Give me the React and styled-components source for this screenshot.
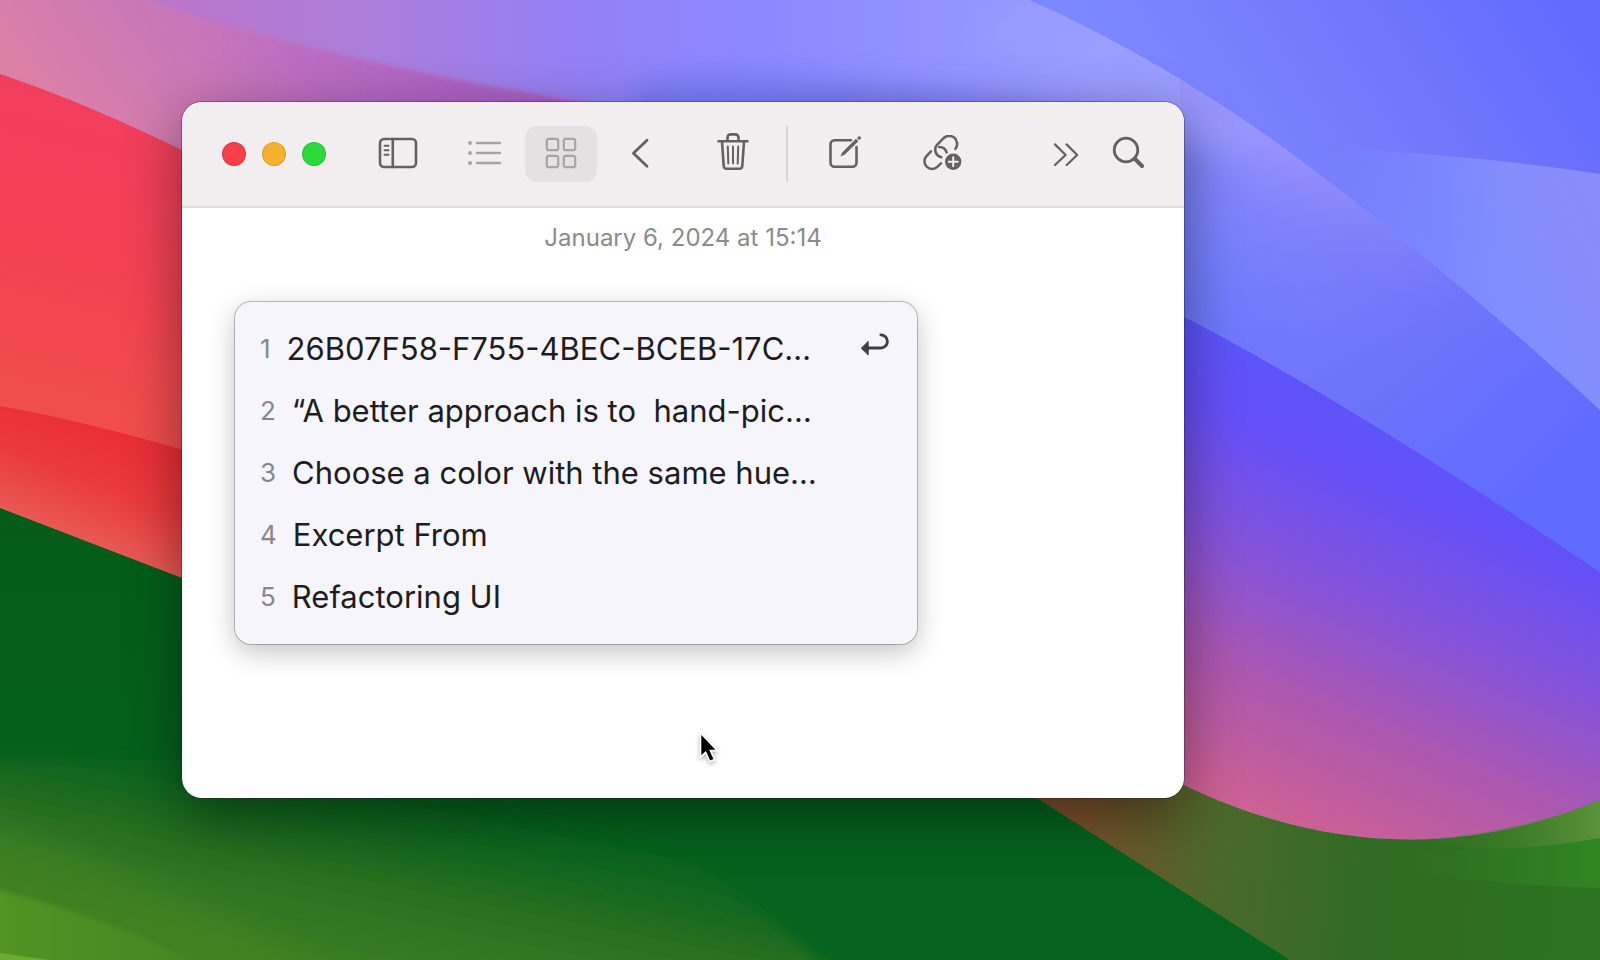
import React from "react";
import styled, { createGlobalStyle } from "styled-components";

const GlobalStyle = createGlobalStyle`
  * { box-sizing: border-box; }
  body {
    margin: 0;
    font-family: Inter, "Liberation Sans", sans-serif;
    -webkit-font-smoothing: antialiased;
  }
  button { font: inherit; color: inherit; }
`;

const Desktop = styled.div`
  position: relative;
  display: flex;
  min-height: 100vh;
  padding: 102px 26% 162px 182px;
  overflow: hidden;
`;

const WallpaperSvg = styled.svg`
  position: absolute;
  inset: 0;
  width: 100%;
  height: 100%;
`;

const Window = styled.main`
  position: relative;
  flex: 1;
  display: flex;
  flex-direction: column;
  min-width: 0;
  border-radius: 20px;
  background: #ffffff;
  box-shadow: 0 0 0 1px rgba(30, 10, 50, 0.3), 0 16px 56px rgba(0, 0, 0, 0.42);
`;

const Toolbar = styled.header`
  display: flex;
  align-items: center;
  height: 106px;
  padding: 0 32px 0 40px;
  border-bottom: 2px solid #dfdbdd;
  border-radius: 20px 20px 0 0;
  background: #f2eeef;
  color: #656162;
`;

const Group = styled.div`
  display: flex;
  align-items: center;
  gap: ${(p) => p.$gap || 0}px;
  margin-left: ${(p) => (p.$end ? "auto" : `${p.$before || 0}px`)};
`;

const Light = styled.button`
  width: 24px;
  height: 24px;
  padding: 0;
  border: 1px solid rgba(0, 0, 0, 0.1);
  border-radius: 50%;
  background: ${(p) => p.$color};
`;

const ToolButton = styled.button`
  display: flex;
  align-items: center;
  justify-content: center;
  flex: none;
  width: ${(p) => (p.$narrow ? 48 : 72)}px;
  height: 56px;
  padding: 0;
  border: 0;
  border-radius: 12px;
  background: ${(p) => (p.$active ? "#e4e1e2" : "transparent")};
  color: ${(p) => (p.$muted ? "#a8a4a5" : "inherit")};
`;

const Separator = styled.span`
  flex: none;
  width: 2px;
  height: 56px;
  background: #d8d4d5;
`;

const Icon = styled.svg`
  display: block;
  flex: none;
  fill: none;
  stroke: currentColor;
  stroke-width: 2.6;
  stroke-linecap: round;
  stroke-linejoin: round;
`;

const Note = styled.section`
  flex: 1;
  padding: 16px 53px 0;
`;

const NoteDate = styled.time`
  display: block;
  font-size: 24px;
  line-height: 28px;
  text-align: center;
  color: #8c8b8c;
`;

const ClipList = styled.ol`
  width: 77%;
  max-width: 682px;
  margin: 50px 0 0;
  padding: 16px 0;
  list-style: none;
  border-radius: 16px;
  background: #f6f5fb;
  box-shadow: 0 0 0 1px rgba(0, 0, 0, 0.24), 0 8px 28px rgba(0, 0, 0, 0.24);
`;

const ClipRow = styled.button`
  display: flex;
  align-items: center;
  width: 100%;
  height: 62px;
  padding: 0 28px 0 25px;
  border: 0;
  background: none;
  text-align: left;
`;

const ClipNumber = styled.span`
  margin-right: 16px;
  font-size: 26px;
  line-height: 36px;
  color: #88878d;
`;

const ClipText = styled.span`
  flex: 1;
  font-size: 31px;
  line-height: 36px;
  white-space: pre;
  color: #1d1c21;
`;

const Cursor = styled.svg`
  position: absolute;
  left: 516px;
  top: 628px;
  filter: drop-shadow(0 2px 2px rgba(0, 0, 0, 0.3));
`;

const clips = [
  "26B07F58-F755-4BEC-BCEB-17C…",
  "“A better approach is to  hand-pic…",
  "Choose a color with the same hue…",
  "Excerpt From",
  "Refactoring UI",
];

function Wallpaper() {
  return (
    <WallpaperSvg viewBox="0 0 1600 960" preserveAspectRatio="none" aria-hidden="true">
      <defs>
        <linearGradient id="sky" gradientUnits="userSpaceOnUse" x1="100" y1="0" x2="1100" y2="0">
          <stop offset="0" stopColor="#c074c4" />
          <stop offset="0.25" stopColor="#ad7dd8" />
          <stop offset="0.48" stopColor="#9481f6" />
          <stop offset="0.65" stopColor="#8b88ff" />
          <stop offset="1" stopColor="#9a9cff" />
        </linearGradient>
        <linearGradient id="pink" gradientUnits="userSpaceOnUse" x1="60" y1="130" x2="260" y2="-20">
          <stop offset="0" stopColor="#dc80a6" />
          <stop offset="0.5" stopColor="#cb79b4" />
          <stop offset="1" stopColor="#bf72c2" />
        </linearGradient>
        <linearGradient id="pinkEnd" gradientUnits="userSpaceOnUse" x1="200" y1="0" x2="590" y2="0">
          <stop offset="0" stopColor="#b868be" stopOpacity="0" />
          <stop offset="0.6" stopColor="#ae65c4" />
          <stop offset="1" stopColor="#a45fc8" />
        </linearGradient>
        <linearGradient id="topRight" gradientUnits="userSpaceOnUse" x1="1220" y1="220" x2="1560" y2="0">
          <stop offset="0" stopColor="#7c88ff" />
          <stop offset="0.5" stopColor="#7478fb" />
          <stop offset="1" stopColor="#626bfd" />
        </linearGradient>
        <linearGradient id="glow" gradientUnits="userSpaceOnUse" x1="1380" y1="300" x2="1600" y2="200">
          <stop offset="0" stopColor="#7a8eff" />
          <stop offset="0.5" stopColor="#808efd" />
          <stop offset="1" stopColor="#8c8bfa" />
        </linearGradient>
        <linearGradient id="glowFade" gradientUnits="userSpaceOnUse" x1="1320" y1="0" x2="1500" y2="0">
          <stop offset="0" stopColor="#fff" stopOpacity="0" />
          <stop offset="1" stopColor="#fff" />
        </linearGradient>
        <mask id="glowMask">
          <rect width="1600" height="960" fill="url(#glowFade)" />
        </mask>
        <linearGradient id="band" gradientUnits="userSpaceOnUse" x1="1320" y1="170" x2="1220" y2="330">
          <stop offset="0" stopColor="#9690fb" />
          <stop offset="0.35" stopColor="#7f84fb" />
          <stop offset="1" stopColor="#6c7afc" />
        </linearGradient>
        <linearGradient id="bandEnd" gradientUnits="userSpaceOnUse" x1="1270" y1="180" x2="1570" y2="450">
          <stop offset="0" stopColor="#7878fa" stopOpacity="0" />
          <stop offset="0.55" stopColor="#6c72fa" stopOpacity="0.9" />
          <stop offset="1" stopColor="#606cff" />
        </linearGradient>
        <linearGradient id="deep" gradientUnits="userSpaceOnUse" x1="1470" y1="420" x2="1290" y2="840">
          <stop offset="0" stopColor="#5a56fb" />
          <stop offset="0.2" stopColor="#6450f8" />
          <stop offset="0.45" stopColor="#8453da" />
          <stop offset="0.72" stopColor="#ae58ae" />
          <stop offset="1" stopColor="#d06290" />
        </linearGradient>
        <linearGradient id="olive" gradientUnits="userSpaceOnUse" x1="1070" y1="850" x2="1600" y2="900">
          <stop offset="0" stopColor="#7c502c" />
          <stop offset="0.12" stopColor="#665a2a" />
          <stop offset="0.28" stopColor="#4a692a" />
          <stop offset="0.55" stopColor="#326b24" />
          <stop offset="1" stopColor="#2b731e" />
        </linearGradient>
        <linearGradient id="leaf" gradientUnits="userSpaceOnUse" x1="1420" y1="0" x2="1600" y2="0">
          <stop offset="0" stopColor="#3c7a28" stopOpacity="0" />
          <stop offset="1" stopColor="#5c923a" />
        </linearGradient>
        <linearGradient id="leafLow" gradientUnits="userSpaceOnUse" x1="1400" y1="0" x2="1600" y2="0">
          <stop offset="0" stopColor="#2c7a20" stopOpacity="0" />
          <stop offset="1" stopColor="#308622" />
        </linearGradient>
        <linearGradient id="red" gradientUnits="userSpaceOnUse" x1="120" y1="100" x2="40" y2="430">
          <stop offset="0" stopColor="#f13e5e" />
          <stop offset="0.5" stopColor="#f24252" />
          <stop offset="1" stopColor="#f0504a" />
        </linearGradient>
        <linearGradient id="redLow" gradientUnits="userSpaceOnUse" x1="110" y1="420" x2="60" y2="550">
          <stop offset="0" stopColor="#ea2c38" />
          <stop offset="0.45" stopColor="#ea3a3c" />
          <stop offset="1" stopColor="#e8625a" />
        </linearGradient>
        <linearGradient id="green" gradientUnits="userSpaceOnUse" x1="0" y1="500" x2="0" y2="960">
          <stop offset="0" stopColor="#045c18" />
          <stop offset="1" stopColor="#066420" />
        </linearGradient>
        <linearGradient id="lime" gradientUnits="userSpaceOnUse" x1="260" y1="760" x2="220" y2="960">
          <stop offset="0" stopColor="#1a6a20" stopOpacity="0" />
          <stop offset="0.5" stopColor="#2a7020" />
          <stop offset="1" stopColor="#3e8020" />
        </linearGradient>
        <linearGradient id="grass" gradientUnits="userSpaceOnUse" x1="0" y1="0" x2="200" y2="0">
          <stop offset="0" stopColor="#529422" />
          <stop offset="1" stopColor="#448624" />
        </linearGradient>
        <filter id="soft" x="-20%" y="-20%" width="140%" height="140%">
          <feGaussianBlur stdDeviation="14" />
        </filter>
        <filter id="faint" x="-5%" y="-5%" width="110%" height="110%">
          <feGaussianBlur stdDeviation="2" />
        </filter>
        <filter id="edge" x="-5%" y="-20%" width="110%" height="140%">
          <feGaussianBlur stdDeviation="7" />
        </filter>
      </defs>
      <rect width="1600" height="960" fill="url(#sky)" />
      <path d="M640 80 Q800 64 1180 130 V200 H600Z" fill="#7a7cf8" filter="url(#soft)" />
      <path d="M-10 -10 H120 C240 36 420 76 590 104 L600 300 H-10Z" fill="url(#pink)" filter="url(#faint)" />
      <path d="M-10 -10 H120 C240 36 420 76 590 104 L600 300 H-10Z" fill="url(#pinkEnd)" filter="url(#faint)" />
      <path d="M1180 80 H1230 C1255 118 1275 138 1287 150 C1400 234 1510 326 1600 410 V620 H1180Z" fill="url(#band)" />
      <path d="M1029 0 C1130 44 1230 108 1287 150 L1200 150 C1140 110 1040 50 960 40Z" fill="#9c9eff" opacity="0.6" filter="url(#soft)" />
      <path d="M1287 150 C1400 234 1510 326 1600 410 V620 H1184 V180Z" fill="url(#bandEnd)" />
      <path d="M1029 0 C1130 44 1230 108 1287 150 C1400 234 1510 326 1600 410 V0Z" fill="url(#topRight)" />
      <path d="M1320 148 Q1470 154 1600 174 V410 C1510 326 1400 234 1287 150Z" fill="url(#glow)" mask="url(#glowMask)" />
      <path d="M1184 317 C1280 366 1420 450 1600 572 V800 C1480 850 1340 860 1184 785 L1100 740 V280Z" fill="url(#deep)" />
      <path d="M1000 780 H1175 L1184 785 C1340 860 1480 850 1600 800 V960 H1270Z" fill="url(#olive)" />
      <path d="M1420 839 C1490 834 1550 821 1600 800 V838 Q1540 850 1470 849Z" fill="url(#leaf)" />
      <path d="M1400 850 Q1530 852 1600 838 V888 Q1500 886 1400 870Z" fill="url(#leafLow)" />
      <path d="M0 74 Q90 104 200 159 V600 H0Z" fill="url(#red)" />
      <path d="M0 406 Q90 422 200 455 V600 H0Z" fill="url(#redLow)" />
      <path d="M0 508 L182 578 L1040 800 L1290 960 H0Z" fill="url(#green)" />
      <path d="M-40 760 H560 Q700 860 850 985 H-40Z" fill="url(#lime)" filter="url(#edge)" />
      <path d="M-40 820 Q80 840 360 985 H-40Z" fill="#448622" opacity="0.55" filter="url(#soft)" />
      <path d="M-10 888 Q100 914 200 965 H-10Z" fill="url(#grass)" filter="url(#faint)" />
      <path d="M0 953 L50 960 H0Z" fill="#6aac30" />
    </WallpaperSvg>
  );
}

const SidebarIcon = () => (
  <Icon width="40" height="34" viewBox="0 0 40 34">
    <rect x="2" y="2" width="36" height="28" rx="4" />
    <path d="M14.8 2V30" />
    <path d="M6.5 8.7H10.5M6.5 13.2H10.5M6.5 17.7H10.5" style={{ strokeWidth: 2 }} />
  </Icon>
);

const ListIcon = () => (
  <Icon width="36" height="26" viewBox="0 0 36 26">
    <path d="M10 2H33M10 12H33M10 22H33" style={{ strokeWidth: 2.4 }} />
    <g fill="currentColor" stroke="none">
      <circle cx="3" cy="2" r="2" />
      <circle cx="3" cy="12" r="2" />
      <circle cx="3" cy="22" r="2" />
    </g>
  </Icon>
);

const GridIcon = () => (
  <Icon width="32" height="34" viewBox="0 0 32 34">
    <g style={{ strokeWidth: 2.2 }}>
      <rect x="1.8" y="1.8" width="11.4" height="11.4" rx="2" />
      <rect x="18.8" y="1.8" width="11.4" height="11.4" rx="2" />
      <rect x="1.8" y="18.8" width="11.4" height="11.4" rx="2" />
      <rect x="18.8" y="18.8" width="11.4" height="11.4" rx="2" />
    </g>
  </Icon>
);

const BackIcon = () => (
  <Icon width="18" height="32" viewBox="0 0 18 32">
    <path d="M16 2.2L2.4 15.2L16 28.2" style={{ strokeWidth: 2.8 }} />
  </Icon>
);

const TrashIcon = () => (
  <Icon width="32" height="42" viewBox="0 0 32 42">
    <path d="M1.5 8.2H30.5M10.5 8V4.4a3 3 0 0 1 3-3h5a3 3 0 0 1 3 3V8" />
    <path d="M5 8.5L6.7 33a3 3 0 0 0 3 2.8H22.3a3 3 0 0 0 3-2.8L27 8.5" />
    <path d="M10.8 13.5L11.3 30.5M16 13.5V30.5M21.2 13.5L20.7 30.5" style={{ strokeWidth: 2 }} />
  </Icon>
);

const ComposeIcon = () => (
  <Icon width="36" height="36" viewBox="0 0 36 36">
    <path d="M23 4.2H6.5a4 4 0 0 0-4 4V26.8a4 4 0 0 0 4 4H24.5a4 4 0 0 0 4-4V11" />
    <path d="M12.4 20.6L14.2 16.4L28 2.8L30.4 5.2L16.6 18.8Z" fill="currentColor" stroke="none" />
    <circle cx="31.2" cy="2" r="1.8" fill="currentColor" stroke="none" />
  </Icon>
);

const LinkIcon = () => (
  <Icon width="42" height="38" viewBox="0 0 42 38">
    <path d="M32.4 13.8A7.7 7.7 0 0 0 19.9 3.9L14 9.8A7.7 7.7 0 0 0 18.4 22.2" />
    <path d="M8 16.4L3.7 20.8A7.7 7.7 0 0 0 14.6 31.7L18 28.4" />
    <path d="M16.2 12A7.7 7.7 0 0 1 23.6 17.4" />
    <circle cx="30.2" cy="26.7" r="8.2" fill="currentColor" stroke="none" />
    <path d="M30.2 22.2V31.2M25.7 26.7H34.7" style={{ stroke: "#f2eeef", strokeWidth: 2 }} />
  </Icon>
);

const MoreIcon = () => (
  <Icon width="26" height="24" viewBox="0 0 26 24">
    <path d="M2 2.4L12.6 13L2 23M13.6 2.4L24.2 13L13.6 23" style={{ strokeWidth: 2.2 }} />
  </Icon>
);

const SearchIcon = () => (
  <Icon width="32" height="36" viewBox="0 0 32 36">
    <circle cx="14" cy="14" r="11.8" style={{ strokeWidth: 2.8 }} />
    <path d="M23 23L30 30" style={{ strokeWidth: 4 }} />
  </Icon>
);

const ReturnIcon = () => (
  <Icon width="28" height="32" viewBox="0 0 28 32" color="#3f3e43">
    <path d="M7 15H19.8a6.6 6.6 0 0 0 0-13.2" style={{ strokeWidth: 2.8 }} />
    <path d="M0.5 15L7.2 8.4V21.6Z" fill="currentColor" style={{ strokeWidth: 1 }} />
  </Icon>
);

export default function App() {
  return (
    <>
      <GlobalStyle />
      <Desktop>
        <Wallpaper />
        <Window>
          <Toolbar>
            <Group $gap={16}>
              <Light $color="#f5404c" aria-label="Close" />
              <Light $color="#f4b02e" aria-label="Minimize" />
              <Light $color="#2bd93c" aria-label="Zoom" />
            </Group>
            <Group $before={36}>
              <ToolButton aria-label="Toggle sidebar"><SidebarIcon /></ToolButton>
            </Group>
            <Group $before={15} $gap={4}>
              <ToolButton $muted aria-label="List view"><ListIcon /></ToolButton>
              <ToolButton $muted $active aria-label="Gallery view"><GridIcon /></ToolButton>
            </Group>
            <Group $before={19} $gap={33}>
              <ToolButton $narrow aria-label="Back"><BackIcon /></ToolButton>
              <ToolButton aria-label="Delete"><TrashIcon /></ToolButton>
            </Group>
            <Group $before={17} $gap={22}>
              <Separator />
              <Group $gap={26}>
                <ToolButton aria-label="New note"><ComposeIcon /></ToolButton>
                <ToolButton aria-label="Add link"><LinkIcon /></ToolButton>
              </Group>
            </Group>
            <Group $end $gap={14}>
              <ToolButton $narrow aria-label="More"><MoreIcon /></ToolButton>
              <ToolButton $narrow aria-label="Search"><SearchIcon /></ToolButton>
            </Group>
          </Toolbar>
          <Note>
            <NoteDate dateTime="2024-01-06T15:14">January 6, 2024 at 15:14</NoteDate>
            <ClipList>
              {clips.map((text, i) => (
                <li key={text}>
                  <ClipRow>
                    <ClipNumber>{i + 1}</ClipNumber>
                    <ClipText>{text}</ClipText>
                    {i === 0 && <ReturnIcon />}
                  </ClipRow>
                </li>
              ))}
            </ClipList>
          </Note>
          <Cursor width="22" height="34" viewBox="0 0 22 34" aria-hidden="true">
            <path
              d="M2.5 3V27.2L7.6 22.4L11.8 31.6L16.6 29.6L12.4 20.6H19.4Z"
              fill="#000"
              stroke="#fff"
              strokeWidth="1.6"
            />
          </Cursor>
        </Window>
      </Desktop>
    </>
  );
}
